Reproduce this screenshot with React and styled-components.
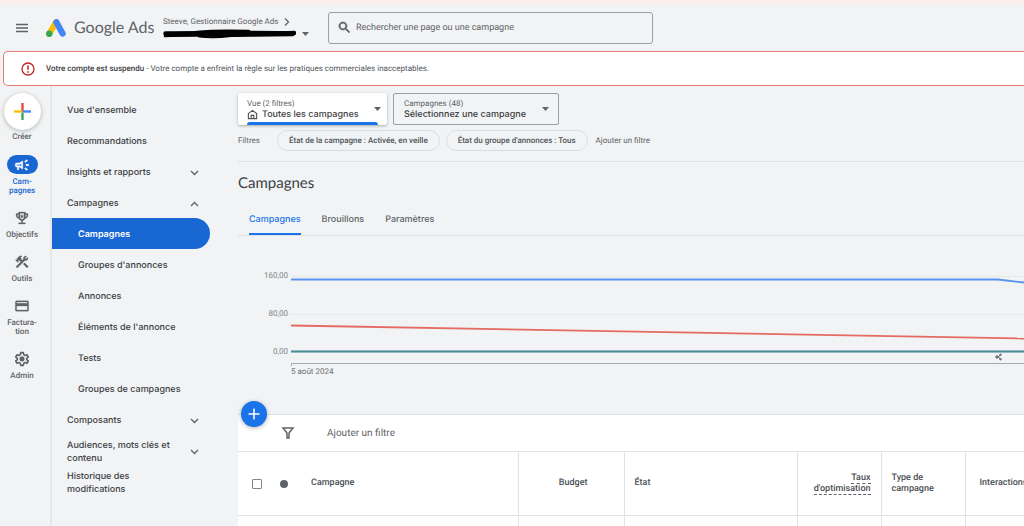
import React, { useState } from "react";
import styled, { createGlobalStyle, css } from "styled-components";

const GlobalStyle = createGlobalStyle`
  * {
    box-sizing: border-box;
  }

  body {
    margin: 0;
    background: #f1f3f4;
    color: #3c4043;
    font-family: Roboto, sans-serif;
    font-size: 9px;
    text-rendering: geometricPrecision;
    overflow: hidden;
  }

  button,
  input {
    font-family: inherit;
    color: inherit;
    text-rendering: inherit;
  }

  button {
    border: 0;
    padding: 0;
    background: none;
    cursor: pointer;
  }

  a {
    color: inherit;
    text-decoration: none;
  }

  svg {
    display: block;
    flex-shrink: 0;
  }
`;

const brandFont = `Inter, "Open Sans", sans-serif`;
const displayFont = `Lato, Inter, sans-serif`;

const Page = styled.div`
  display: flex;
  flex-direction: column;
  height: 100vh;
  border-top: 4px solid #fdeeee;
  overflow: hidden;
`;

const TopBar = styled.header`
  display: flex;
  align-items: center;
  flex-shrink: 0;
  height: 47px;
  padding-left: 16px;
`;

const MenuButton = styled.button`
  width: 12px;
  margin-right: 18px;
`;

const Brand = styled.a`
  display: flex;
  align-items: center;
  gap: 8px;
  width: 117px;
  font-family: ${displayFont};
  font-size: 16px;
  color: #5f6368;
  white-space: nowrap;
`;

const Account = styled.div`
  display: flex;
  flex-direction: column;
  gap: 2px;
  width: 165px;
  color: #5f6368;
`;

const AccountLine = styled.button`
  display: flex;
  align-items: center;
  gap: 6px;
  font-size: 8px;
  line-height: 11px;
  white-space: nowrap;
`;

const SearchBox = styled.label`
  display: flex;
  align-items: center;
  gap: 4px;
  width: 325px;
  height: 32px;
  padding: 0 8px;
  border: 1px solid #9aa0a6;
  border-radius: 3px;
  color: #5f6368;
`;

const SearchInput = styled.input`
  flex: 1;
  min-width: 0;
  border: 0;
  padding: 0;
  outline: 0;
  background: none;
  font-size: 9px;

  &::placeholder {
    color: #5f6368;
    opacity: 1;
  }
`;

const Alert = styled.div`
  display: flex;
  align-items: center;
  flex-shrink: 0;
  gap: 11px;
  height: 35px;
  margin-left: 3px;
  padding-left: 17px;
  border: solid #e67c73;
  border-width: 1px 0 1px 1px;
  border-radius: 5px 0 0 5px;
  background: #fff;
  color: #50555a;
  font-size: 8px;

  strong {
    font-weight: 500;
    color: #3c4043;
  }
`;

const Body = styled.div`
  display: flex;
  flex: 1;
  min-height: 0;
`;

const Rail = styled.nav`
  display: flex;
  flex-direction: column;
  align-items: center;
  width: 52px;
  padding: 7px 6px 0 0;
  border-right: 2px solid #e6e8ea;
  flex-shrink: 0;
`;

const CreateButton = styled.button`
  display: flex;
  flex-direction: column;
  align-items: center;
  margin-bottom: 14px;
  font-size: 8px;
  line-height: 9px;
  font-weight: 500;
  color: #5f6368;
`;

const CreateCircle = styled.span`
  display: flex;
  align-items: center;
  justify-content: center;
  width: 37px;
  height: 37px;
  margin-bottom: 2px;
  border-radius: 50%;
  background: #fff;
  box-shadow: 0 1px 4px rgba(60, 64, 67, 0.35);
`;

const RailItem = styled.a`
  display: flex;
  flex-direction: column;
  align-items: center;
  margin-bottom: 13px;
  font-size: 8px;
  line-height: 9px;
  font-weight: 500;
  text-align: center;
  white-space: pre-line;
  color: ${({ $active }) => ($active ? "#1967d2" : "#5f6368")};
`;

const RailIcon = styled.span`
  display: flex;
  align-items: center;
  justify-content: center;
  width: 31px;
  height: 19px;
  margin-bottom: 3px;
  border-radius: 10px;
  ${({ $active }) =>
    $active &&
    css`
      background: #1967d2;
      color: #fff;
    `}
`;

const SideMenu = styled.nav`
  display: flex;
  flex-direction: column;
  width: 158px;
  margin-right: 28px;
  padding-top: 8px;
  flex-shrink: 0;
`;

const MenuItem = styled.a`
  display: flex;
  align-items: center;
  justify-content: space-between;
  flex-shrink: 0;
  height: 31px;
  padding: 2px 11px 0 ${({ $nested }) => ($nested ? "26px" : "15px")};
  border-radius: 0 16px 16px 0;
  font-family: ${brandFont};
  font-size: 9px;
  line-height: 13px;
  font-weight: 500;
  white-space: pre-line;
  ${({ $active }) =>
    $active &&
    css`
      background: #1967d2;
      color: #fff;
      font-weight: 600;
    `}
`;

const Content = styled.main`
  display: flex;
  flex-direction: column;
  flex: 1;
  min-width: 0;
  padding-top: 7px;
`;

const Pickers = styled.div`
  display: flex;
  gap: 6px;
`;

const Picker = styled.button`
  position: relative;
  display: flex;
  align-items: center;
  justify-content: space-between;
  width: ${({ $wide }) => ($wide ? "166px" : "149px")};
  height: 32px;
  padding: 0 ${({ $wide }) => ($wide ? "9px" : "6px")} 0 ${({ $wide }) => ($wide ? "10px" : "9px")};
  border-radius: 2px;
  text-align: left;
  ${({ $selected }) =>
    $selected
      ? css`
          background: #fff;
          box-shadow: 0 1px 3px rgba(60, 64, 67, 0.4);

          &:after {
            content: "";
            position: absolute;
            left: 9px;
            right: 9px;
            bottom: 0;
            height: 3px;
            border-radius: 3px 3px 0 0;
            background: #1a73e8;
          }
        `
      : css`
          border: 1px solid #9aa0a6;
        `}
`;

const PickerCaption = styled.span`
  display: block;
  font-size: 8px;
  line-height: 11px;
  color: #5f6368;
`;

const PickerValue = styled.span`
  display: flex;
  align-items: center;
  gap: 4px;
  font-family: ${brandFont};
  font-size: 9px;
  line-height: 12px;
  font-weight: 500;
  white-space: nowrap;
`;

const Filters = styled.div`
  display: flex;
  align-items: center;
  gap: 6px;
  margin-top: 5px;
  color: #5f6368;
  font-size: 8px;
`;

const FilterLabel = styled.span`
  width: 33px;
`;

const Chip = styled.button`
  height: 21px;
  padding: 0 11px;
  border: 1px solid #dadce0;
  border-radius: 11px;
  color: #50555a;
  font-size: 8px;
  font-weight: 500;
  white-space: nowrap;
`;

const AddFilter = styled.button`
  padding: 0 2px;
  font-size: ${({ $large }) => ($large ? "10px" : "8px")};
  color: #5f6368;
`;

const Title = styled.h1`
  margin: 10px 0 0;
  border-top: 1px solid #dfe1e4;
  padding-top: 12px;
  font-family: ${displayFont};
  font-size: 15px;
  line-height: 18px;
  font-weight: 400;
`;

const Tabs = styled.div`
  display: flex;
  gap: 21px;
  height: 44px;
  padding-left: 11px;
  border-bottom: 1px solid #dfe1e4;
  flex-shrink: 0;
`;

const Tab = styled.button`
  padding-top: 13px;
  border-bottom: 2px solid ${({ $active }) => ($active ? "#1a73e8" : "transparent")};
  font-family: ${brandFont};
  font-size: 9px;
  font-weight: 500;
  color: ${({ $active }) => ($active ? "#1a73e8" : "#5f6368")};
`;

const ChartArea = styled.section`
  display: grid;
  grid-template-columns: 50px 1fr;
  column-gap: 3px;
  height: 178px;
  padding-top: 34px;
  flex-shrink: 0;
`;

const Axis = styled.div`
  display: flex;
  flex-direction: column;
  gap: 27px;
  text-align: right;
  font-size: 8px;
  line-height: 11px;
  color: #80868b;
`;

const Plot = styled.div`
  min-width: 0;
  overflow: hidden;
  color: #6b7075;
  font-size: 8px;
  line-height: 12px;
`;

const TableArea = styled.section`
  position: relative;
  flex: 1;
  min-height: 0;
  border-top: 1px solid #dfe1e4;
  background: #fff;
  overflow: visible;
`;

const AddButton = styled.button`
  position: absolute;
  top: -14px;
  left: 3px;
  display: flex;
  align-items: center;
  justify-content: center;
  width: 26px;
  height: 26px;
  border-radius: 50%;
  background: #1a73e8;
  color: #fff;
  box-shadow: 0 1px 4px rgba(60, 64, 67, 0.4);
`;

const TableTools = styled.div`
  display: flex;
  align-items: center;
  gap: 30px;
  height: 36px;
  padding-left: 43px;
  color: #5f6368;
`;

const TableClip = styled.div`
  overflow: hidden;
`;

const Table = styled.table`
  width: 830px;
  table-layout: fixed;
  border-collapse: collapse;
`;

const Th = styled.th`
  height: 64px;
  padding: 0 ${({ $right }) => ($right || "10px")} 0 ${({ $left }) => $left || "10px"};
  border: solid #e0e2e5;
  border-width: 1px 0 1px ${({ $line }) => ($line ? "1px" : "0")};
  font-size: 9px;
  line-height: 11px;
  font-weight: 500;
  color: #4b5055;
  text-align: ${({ $align }) => $align || "left"};

  abbr {
    border-bottom: 1px dashed #5f6368;
    text-decoration: none;
  }
`;

const Td = styled.td`
  height: 20px;
  border-left: ${({ $line }) => ($line ? "1px solid #e0e2e5" : "0")};
`;

const Checkbox = styled.input`
  display: block;
  appearance: none;
  width: 10px;
  height: 10px;
  margin: 0;
  border: 1px solid #80868b;
  border-radius: 1px;
`;

const Dot = styled.span`
  display: block;
  width: 8px;
  height: 8px;
  border-radius: 50%;
  background: #5f6368;
`;

const Chevron = ({ up }) => (
  <svg width="9" height="6" viewBox="0 0 9 6" fill="none" stroke="#5f6368" strokeWidth="1.3">
    <path d={up ? "M1 5 4.5 1.5 8 5" : "M1 1 4.5 4.5 8 1"} />
  </svg>
);

const Caret = () => (
  <svg width="7" height="4" viewBox="0 0 7 4" fill="#5f6368">
    <path d="M0 0h7L3.500 4z" />
  </svg>
);

const AdsLogo = () => (
  <svg width="20" height="18" viewBox="0 0 20 18">
    <path d="M10.100 3.200 3.200 14.800" stroke="#fbbc04" strokeWidth="6" strokeLinecap="round" />
    <path d="M10.400 3.200 16.600 14.600" stroke="#4285f4" strokeWidth="6.200" strokeLinecap="round" />
    <circle cx="3.300" cy="14.700" r="3.200" fill="#34a853" />
  </svg>
);

const Icon = ({ size = 16, weight = 0, children }) => (
  <svg
    width={size}
    height={size}
    viewBox="0 0 24 24"
    fill="currentColor"
    stroke={weight ? "currentColor" : "none"}
    strokeWidth={weight}
  >
    {children}
  </svg>
);

const railItems = [
  {
    label: "Cam-\npagnes",
    active: true,
    icon: (
      <path d="M18 11v2h4v-2h-4zm-2 6.610c.960.710 2.210 1.650 3.200 2.390.400-.530.800-1.070 1.200-1.600-.990-.740-2.240-1.680-3.200-2.400-.400.540-.800 1.080-1.200 1.610zM20.400 5.600c-.400-.530-.800-1.070-1.200-1.600-.990.740-2.240 1.680-3.200 2.400.400.530.800 1.070 1.200 1.600.960-.720 2.210-1.650 3.200-2.400zM4 9c-1.100 0-2 .900-2 2v2c0 1.100.900 2 2 2h1v4h2v-4h1l5 3V6L8 9H4zm5.030 1.710L11 9.530v4.940l-1.970-1.180-.480-.290H4v-2h4.550l.480-.290z" />
    ),
  },
  {
    label: "Objectifs",
    icon: (
      <path d="M19 5h-2V3H7v2H5c-1.100 0-2 .900-2 2v1c0 2.550 1.920 4.630 4.390 4.940.630 1.500 1.980 2.630 3.610 2.960V19H7v2h10v-2h-4v-3.100c1.630-.330 2.980-1.460 3.610-2.960C19.080 12.630 21 10.550 21 8V7c0-1.100-.900-2-2-2zM5 8V7h2v3.820C5.840 10.400 5 9.300 5 8zm7 6c-1.650 0-3-1.350-3-3V5h6v6c0 1.650-1.350 3-3 3zm7-6c0 1.300-.840 2.400-2 2.820V7h2v1zM12 6.500l.8 2h2l-1.600 1.300.6 2.100-1.800-1.200-1.800 1.200.6-2.100-1.600-1.300h2z" />
    ),
  },
  {
    label: "Outils",
    icon: (
      <path d="m13.780 15.170 2.120-2.120 5.700 5.690-2.120 2.120zM17.500 10c1.930 0 3.500-1.570 3.500-3.500 0-.580-.160-1.120-.410-1.600l-2.700 2.700-1.490-1.490 2.700-2.700C18.620 3.160 18.080 3 17.500 3 15.570 3 14 4.570 14 6.500c0 .410.080.800.210 1.160l-1.850 1.850-1.780-1.780.710-.710-1.410-1.410L12 3.490c-1.170-1.170-3.070-1.170-4.240 0L4.220 7.030l1.410 1.410H2.810l-.710.710 3.540 3.540.710-.710V9.150l1.410 1.410.710-.710 1.780 1.780-7.410 7.410 2.120 2.120L16.340 9.790c.360.130.750.210 1.160.210z" />
    ),
  },
  {
    label: "Factura-\ntion",
    icon: (
      <path d="M20 4H4c-1.110 0-1.990.890-1.990 2L2 18c0 1.110.890 2 2 2h16c1.110 0 2-.890 2-2V6c0-1.110-.890-2-2-2zm0 14H4v-6h16v6zm0-10H4V6h16v2z" />
    ),
  },
  {
    label: "Admin",
    icon: (
      <>
        <path
          d="m10 2.500-.5 3-2 1.200-2.900-1.100-2 3.400L5 10.900v2.200L2.600 15l2 3.400 2.900-1.100 2 1.200.5 3h4l.5-3 2-1.200 2.900 1.100 2-3.400-2.400-1.900v-2.200L21.400 9l-2-3.400-2.900 1.100-2-1.200-.5-3z"
          fill="none"
          stroke="currentColor"
          strokeWidth="2.400"
          strokeLinejoin="round"
        />
        <circle cx="12" cy="12" r="3.700" />
      </>
    ),
  },
];

const menuItems = [
  { label: "Vue d'ensemble" },
  { label: "Recommandations" },
  { label: "Insights et rapports", arrow: "down" },
  { label: "Campagnes", arrow: "up" },
  { label: "Campagnes", nested: true, active: true },
  { label: "Groupes d'annonces", nested: true },
  { label: "Annonces", nested: true },
  { label: "Éléments de l'annonce", nested: true },
  { label: "Tests", nested: true },
  { label: "Groupes de campagnes", nested: true },
  { label: "Composants", arrow: "down" },
  { label: "Audiences, mots clés et\ncontenu", arrow: "down" },
  { label: "Historique des\nmodifications" },
];

const tabs = ["Campagnes", "Brouillons", "Paramètres"];

const Chart = () => (
  <svg width="733" height="92" viewBox="0 0 733 92" fill="none">
    <path d="M0 6.500h733M0 44.500h733" stroke="#e6e8ea" />
    <path d="M0 9.500h707l26 3" stroke="#5a92f0" strokeWidth="1.800" />
    <path d="M0 55.500 733 68.500" stroke="#e46a62" strokeWidth="1.800" />
    <path d="M0 81.500h733" stroke="#a9ccd4" strokeWidth="3" />
    <path d="M0 81.500h733" stroke="#4f8995" strokeWidth="1.500" />
    <g fill="#6b7075" stroke="#6b7075">
      <path d="M705 87h4M707 87l2-2M707 87l2 2" strokeWidth="0.800" />
      <circle cx="706" cy="87" r="1.200" />
      <circle cx="709.500" cy="84.800" r="0.800" />
      <circle cx="709.500" cy="89.200" r="0.800" />
    </g>
  </svg>
);

const AxisLine = styled.div`
  height: 3px;
  margin-top: 1px;
  border-top: 1px solid #a8abae;
  border-left: 1px solid #a8abae;
`;

const App = () => {
  const [tab, setTab] = useState("Campagnes");

  return (
    <Page>
      <GlobalStyle />
      <TopBar>
        <MenuButton aria-label="Menu">
          <svg width="12" height="10" viewBox="0 0 12 10" stroke="#5f6368" strokeWidth="1.300">
            <path d="M0 1.500h12M0 5h12M0 8.500h12" />
          </svg>
        </MenuButton>
        <Brand href="#home">
          <AdsLogo />
          Google Ads
        </Brand>
        <Account>
          <AccountLine>
            Steeve, Gestionnaire Google Ads
            <svg width="6" height="8" viewBox="0 0 6 8" fill="none" stroke="#5f6368" strokeWidth="1.300">
              <path d="M1 0.500 4.500 4 1 7.500" />
            </svg>
          </AccountLine>
          <AccountLine aria-label="Changer de compte">
            <svg width="133" height="10" viewBox="0 0 133 10" fill="none" stroke="#000" strokeLinecap="round">
              <path d="M2.500 4.500C25 4 48 4 85 4S118 4.500 131 4" strokeWidth="4.500" />
              <path d="M2 7C26 6 58 7 88 6.500S118 6 130 6" strokeWidth="2.500" />
              <path d="M34 3C48 1.500 70 1.500 86 2" strokeWidth="2.500" />
              <path d="M36 7.500C50 9 60 8 68 7" strokeWidth="2" />
            </svg>
            <Caret />
          </AccountLine>
        </Account>
        <SearchBox>
          <Icon size={15} weight={1}>
            <path d="M15.500 14h-.790l-.280-.270C15.410 12.590 16 11.110 16 9.500 16 5.910 13.090 3 9.500 3S3 5.910 3 9.500 5.910 16 9.500 16c1.610 0 3.090-.590 4.230-1.570l.270.280v.790l5 4.990L20.490 19l-4.990-5zm-6 0C7.010 14 5 11.990 5 9.500S7.010 5 9.500 5 14 7.010 14 9.500 11.990 14 9.500 14z" />
          </Icon>
          <SearchInput
            type="search"
            aria-label="Rechercher"
            placeholder="Rechercher une page ou une campagne"
          />
        </SearchBox>
      </TopBar>

      <Alert role="alert">
        <svg width="14" height="14" viewBox="0 0 14 14" fill="none" stroke="#c5221f">
          <circle cx="7" cy="7" r="6" strokeWidth="1.300" />
          <path d="M7 3.500v4.300M7 9.200v1.500" strokeWidth="1.500" />
        </svg>
        <span>
          <strong>Votre compte est suspendu</strong> - Votre compte a enfreint la règle sur les
          pratiques commerciales inacceptables.
        </span>
      </Alert>

      <Body>
        <Rail>
          <CreateButton>
            <CreateCircle>
              <svg width="17" height="17" viewBox="0 0 16 16">
                <path d="M6.900 0h2.200v8H6.900z" fill="#ea4335" />
                <path d="M0 6.900h8v2.200H0z" fill="#fbbc04" />
                <path d="M8 6.900h8v2.200H8z" fill="#4285f4" />
                <path d="M6.900 9.100h2.200V16H6.900z" fill="#34a853" />
              </svg>
            </CreateCircle>
            Créer
          </CreateButton>
          {railItems.map((item) => (
            <RailItem key={item.label} href="#rail" $active={item.active}>
              <RailIcon $active={item.active}>
                <Icon weight={item.active ? 0.8 : 0.4}>{item.icon}</Icon>
              </RailIcon>
              {item.label}
            </RailItem>
          ))}
        </Rail>

        <SideMenu>
          {menuItems.map((item, i) => (
            <MenuItem key={i} href="#menu" $nested={item.nested} $active={item.active}>
              {item.label}
              {item.arrow && <Chevron up={item.arrow === "up"} />}
            </MenuItem>
          ))}
        </SideMenu>

        <Content>
          <Pickers>
            <Picker $selected>
              <span>
                <PickerCaption>Vue (2 filtres)</PickerCaption>
                <PickerValue>
                  <svg width="11" height="11" viewBox="0 0 12 11" fill="none" stroke="#4b5055">
                    <path d="M1.500 4.500 6 1l4.500 3.500V10h-9zM4.500 10V6.500h3V10" strokeWidth="1.200" />
                  </svg>
                  Toutes les campagnes
                </PickerValue>
              </span>
              <Caret />
            </Picker>
            <Picker $wide>
              <span>
                <PickerCaption>Campagnes (48)</PickerCaption>
                <PickerValue>Sélectionnez une campagne</PickerValue>
              </span>
              <Caret />
            </Picker>
          </Pickers>
          <Filters>
            <FilterLabel>Filtres</FilterLabel>
            <Chip>État de la campagne : Activée, en veille</Chip>
            <Chip>État du groupe d'annonces : Tous</Chip>
            <AddFilter>Ajouter un filtre</AddFilter>
          </Filters>
          <Title>Campagnes</Title>
          <Tabs>
            {tabs.map((name) => (
              <Tab key={name} $active={tab === name} onClick={() => setTab(name)}>
                {name}
              </Tab>
            ))}
          </Tabs>

          <ChartArea>
            <Axis>
              <span>160,00</span>
              <span>80,00</span>
              <span>0,00</span>
            </Axis>
            <Plot>
              <Chart />
              <AxisLine />
              5 août 2024
            </Plot>
          </ChartArea>

          <TableArea>
            <AddButton aria-label="Ajouter une campagne">
              <svg width="12" height="12" viewBox="0 0 12 12" stroke="currentColor" strokeWidth="1.500">
                <path d="M6 0.500v11M0.500 6h11" />
              </svg>
            </AddButton>
            <TableTools>
              <svg width="14" height="12" viewBox="0 0 14 12" fill="none" stroke="#5f6368" strokeWidth="1.500">
                <path d="M2 1h10L8 6v5H6V6z" />
              </svg>
              <AddFilter $large>Ajouter un filtre</AddFilter>
            </TableTools>
            <TableClip>
              <Table>
                <colgroup>
                  <col width="38" />
                  <col width="25" />
                  <col width="217" />
                  <col width="106" />
                  <col width="173" />
                  <col width="84" />
                  <col width="84" />
                  <col width="103" />
                </colgroup>
                <thead>
                  <tr>
                    <Th $left="14px">
                      <Checkbox type="checkbox" aria-label="Tout sélectionner" />
                    </Th>
                    <Th $left="4px">
                      <Dot />
                    </Th>
                    <Th>Campagne</Th>
                    <Th $line $align="right" $right="36px">
                      Budget
                    </Th>
                    <Th $line>État</Th>
                    <Th $line $align="right">
                      <abbr>Taux d'optimisation</abbr>
                    </Th>
                    <Th $line>Type de campagne</Th>
                    <Th $line $left="14px">
                      Interactions
                    </Th>
                  </tr>
                </thead>
                <tbody>
                  <tr>
                    <Td />
                    <Td />
                    <Td />
                    <Td $line />
                    <Td $line />
                    <Td $line />
                    <Td $line />
                    <Td $line />
                  </tr>
                </tbody>
              </Table>
            </TableClip>
          </TableArea>
        </Content>
      </Body>
    </Page>
  );
};

export default App;
